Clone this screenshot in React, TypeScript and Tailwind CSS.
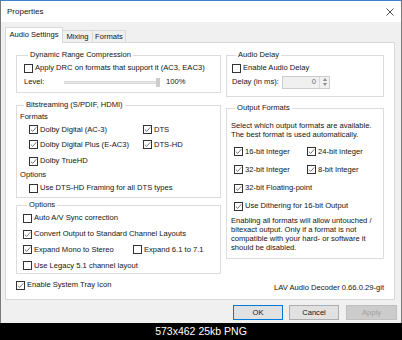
import React from 'react';

const Check = ({ on }: { on?: boolean }) => (
  <span className="w-[9px] h-[9px] border border-[#333333] bg-white flex items-center justify-center shrink-0">
    {on && (
      <svg width="7" height="7" viewBox="0 0 7 7">
        <path d="M0.8 3.6 L2.7 5.4 L6.3 1.3" fill="none" stroke="#4a4a4a" strokeWidth="0.75" />
      </svg>
    )}
  </span>
);

const Box = ({ label, on, className = '' }: { label: string; on?: boolean; className?: string }) => (
  <div className={`flex items-center gap-[2px] ${className}`}>
    <Check on={on} />
    <span className="whitespace-nowrap">{label}</span>
  </div>
);

const Group = ({ title, className = '', children }: { title: string; className?: string; children: React.ReactNode }) => (
  <fieldset className={`border border-[#dcdcdc] min-w-0 ${className}`}>
    <legend className="ml-[4px] px-[2px] leading-[10px] whitespace-nowrap">{title}</legend>
    {children}
  </fieldset>
);

export default function App() {
  return (
    <div className="w-[402px] h-[340px] flex flex-col bg-black font-['Liberation_Sans',Arial,sans-serif] text-[7.6px] text-[#141414]">
      <div className="h-[323px] flex flex-col border-t border-t-[#3b82c8] border-x border-x-[#7a7a7a] bg-[#f0f0f0]">
        {/* Title bar */}
        <div className="h-[21px] bg-white flex items-center justify-between pl-[6px] pr-[7px]">
          <span className="text-[8px]">Properties</span>
          <svg width="8" height="8" viewBox="0 0 8 8">
            <path d="M0.5 0.5 L7.5 7.5 M7.5 0.5 L0.5 7.5" stroke="#222" strokeWidth="0.8" />
          </svg>
        </div>

        <div className="flex-1 flex flex-col pt-[5px] pl-[4px] pr-[6px]">
          {/* Tabs */}
          <div className="flex items-end h-[16px] -mb-px relative z-10">
            <div className="h-[16px] w-[58px] bg-white border border-b-0 border-[#d9d9d9] flex items-center justify-center pb-[1px]">
              Audio Settings
            </div>
            <div className="h-[13px] w-[30px] border border-l-0 border-[#d9d9d9] flex items-center justify-center">Mixing</div>
            <div className="h-[13px] w-[33px] border border-l-0 border-[#d9d9d9] flex items-center justify-center">Formats</div>
          </div>

          {/* Panel */}
          <div className="h-[258px] bg-white border border-[#d9d9d9] flex gap-[5px] pt-[7px] px-[10px]">
            {/* Left column */}
            <div className="w-[205px] flex flex-col">
              <Group title="Dynamic Range Compression" className="pl-[7px] pb-[3px]">
                <Box label="Apply DRC on formats that support it (AC3, EAC3)" className="h-[14px] mt-[1px]" />
                <div className="h-[14px] flex items-center">
                  <span className="w-[40px]">Level:</span>
                  <div className="w-[92px] h-[3px] bg-[#e7e7e7] border-y border-[#dadada]" />
                  <div className="w-[4px] h-[9px] bg-[#cdcdcd]" />
                  <span className="ml-[6px]">100%</span>
                </div>
              </Group>

              <Group title="Bitstreaming (S/PDIF, HDMI)" className="mt-[7px] pl-[3px] pb-[1px]">
                <div className="h-[12px] mt-[1px] flex items-center">Formats</div>
                <div className="ml-[9px] h-[14px] flex items-center">
                  <Box label="Dolby Digital (AC-3)" on className="w-[114px]" />
                  <Box label="DTS" on />
                </div>
                <div className="ml-[9px] h-[16px] flex items-center">
                  <Box label="Dolby Digital Plus (E-AC3)" on className="w-[114px]" />
                  <Box label="DTS-HD" on />
                </div>
                <Box label="Dolby TrueHD" on className="ml-[9px] h-[16px]" />
                <div className="h-[11px] flex items-center">Options</div>
                <Box label="Use DTS-HD Framing for all DTS types" className="ml-[9px] h-[16px]" />
              </Group>

              <Group title="Options" className="mt-[2px] pl-[6px]">
                <Box label="Auto A/V Sync correction" className="h-[16px]" />
                <Box label="Convert Output to Standard Channel Layouts" on className="h-[16px]" />
                <div className="h-[16px] flex items-center">
                  <Box label="Expand Mono to Stereo" on className="w-[110px]" />
                  <Box label="Expand 6.1 to 7.1" />
                </div>
                <Box label="Use Legacy 5.1 channel layout" className="h-[15px]" />
              </Group>

              <Box label="Enable System Tray Icon" on className="mt-[3px] h-[16px]" />
            </div>

            {/* Right column */}
            <div className="w-[158px] flex flex-col">
              <Group title="Audio Delay" className="pl-[5px] pb-[7px]">
                <Box label="Enable Audio Delay" className="h-[14px] mt-[1px]" />
                <div className="h-[14px] flex items-center">
                  <span className="w-[50px]">Delay (in ms):</span>
                  <div className="w-[48px] h-[13px] border border-[#cccccc] bg-[#f0f0f0] flex items-center">
                    <span className="flex-1 text-right pr-[3px] text-[#6d6d6d]">0</span>
                    <div className="w-[10px] h-full border-l border-[#dadada] flex flex-col items-center justify-center gap-[2px]">
                      <svg width="4" height="3" viewBox="0 0 4 3"><path d="M0 3 L2 0 L4 3 Z" fill="#8a8a8a" /></svg>
                      <svg width="4" height="3" viewBox="0 0 4 3"><path d="M0 0 L2 3 L4 0 Z" fill="#8a8a8a" /></svg>
                    </div>
                  </div>
                </div>
              </Group>

              <Group title="Output Formats" className="mt-[6px] pl-[4px] pb-[6px]">
                <div className="mt-[8px] leading-[9px]">
                  <div>Select which output formats are available.</div>
                  <div>The best format is used automatically.</div>
                </div>
                <div className="mt-[4px] ml-[3px]">
                  <div className="h-[18px] flex items-center">
                    <Box label="16-bit Integer" on className="w-[73px]" />
                    <Box label="24-bit Integer" on />
                  </div>
                  <div className="h-[18px] flex items-center">
                    <Box label="32-bit Integer" on className="w-[73px]" />
                    <Box label="8-bit Integer" on />
                  </div>
                  <Box label="32-bit Floating-point" on className="h-[18px]" />
                  <Box label="Use Dithering for  16-bit Output" on className="h-[18px]" />
                </div>
                <div className="mt-[1px] leading-[9px]">
                  <div>Enabling all formats will allow untouched /</div>
                  <div>bitexact output. Only if a format is not</div>
                  <div>compatible with your hard- or software it</div>
                  <div>should be disabled.</div>
                </div>
              </Group>

              <div className="mt-[21px] h-[16px] flex items-center justify-end">LAV Audio Decoder 0.66.0.29-git</div>
            </div>
          </div>

          {/* Buttons */}
          <div className="mt-[5px] -mr-[2px] flex justify-end">
            <button className="w-[50px] h-[15px] border border-[#0078d7] bg-[#e1e1e1]">OK</button>
            <button className="ml-[6px] w-[50px] h-[15px] border border-[#adadad] bg-[#e1e1e1]">Cancel</button>
            <button className="ml-[7px] w-[51px] h-[15px] border border-[#bfbfbf] bg-[#cccccc] text-[#a0a0a0]">Apply</button>
          </div>
        </div>
      </div>

      {/* Caption */}
      <div className="h-[17px] flex items-center justify-center text-white text-[10.5px]">573x462 25kb PNG</div>
    </div>
  );
}
